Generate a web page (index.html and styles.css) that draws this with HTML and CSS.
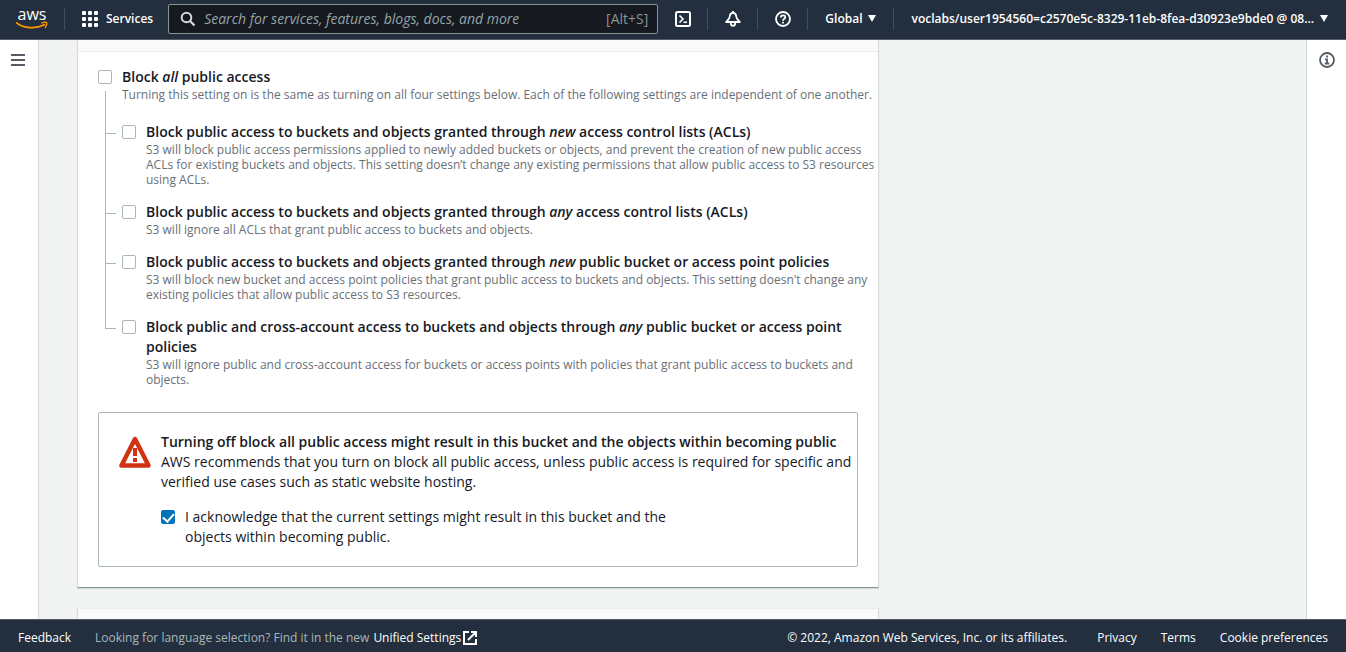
FILE: index.html
```
<!DOCTYPE html>
<html lang="en">
<head>
<meta charset="utf-8">
<title>S3 bucket - Block public access</title>
<link rel="stylesheet" href="styles.css">
</head>
<body>
<header class="topbar">
  <a class="logo" href="#" aria-label="AWS home">
    <svg width="32" height="30" viewBox="0 0 32 30" aria-hidden="true">
      <text class="logo-text" x="16" y="16" text-anchor="middle">aws</text>
      <path d="M0.500 18.800C8 24.600 20 25 28.400 20.800" fill="none" stroke="#f90" stroke-width="1.700" stroke-linecap="round"/>
      <path d="M25.800 19c1.900-.9 4.400-.8 4.900-.3s0 3.200-1.600 4.900" fill="none" stroke="#f90" stroke-width="1.300" stroke-linecap="round" stroke-linejoin="round"/>
    </svg>
  </a>
  <span class="divider"></span>
  <button class="services" type="button">
    <svg width="16" height="16" viewBox="0 0 16 16" fill="#fff" aria-hidden="true">
      <rect width="4" height="4" rx="1"/><rect x="6" width="4" height="4" rx="1"/><rect x="12" width="4" height="4" rx="1"/>
      <rect y="6" width="4" height="4" rx="1"/><rect x="6" y="6" width="4" height="4" rx="1"/><rect x="12" y="6" width="4" height="4" rx="1"/>
      <rect y="12" width="4" height="4" rx="1"/><rect x="6" y="12" width="4" height="4" rx="1"/><rect x="12" y="12" width="4" height="4" rx="1"/>
    </svg>
    Services
  </button>
  <div class="search">
    <svg width="16" height="16" viewBox="0 0 16 16" fill="none" stroke="#d5dbdb" stroke-width="2" aria-hidden="true">
      <circle cx="6.500" cy="6.500" r="4.800"/><path d="M10 10l4.500 4.500" stroke-width="2.300"/>
    </svg>
    <input class="search-input" type="text" aria-label="Search" placeholder="Search for services, features, blogs, docs, and more">
    <span class="shortcut">[Alt+S]</span>
  </div>
  <button class="icon-button" type="button" aria-label="CloudShell">
    <svg width="16" height="16" viewBox="0 0 16 16" fill="none" stroke="#fff" stroke-width="2" aria-hidden="true">
      <rect x="1" y="1" width="14" height="14" rx="1.500"/><path d="M4.500 4.500L8 8l-3.500 3.500M8.500 11.200H12" stroke-width="1.600"/>
    </svg>
  </button>
  <span class="divider"></span>
  <button class="icon-button" type="button" aria-label="Notifications">
    <svg width="16" height="16" viewBox="0 0 16 16" fill="none" stroke="#fff" stroke-width="1.800" stroke-linejoin="round" aria-hidden="true">
      <path d="M8 1.800C6.200 1.800 5 3.200 4.800 5.200C4.600 8 3.400 8.800 1.200 11H14.800C12.600 8.800 11.400 8 11.200 5.200C11 3.200 9.800 1.800 8 1.800Z"/>
      <path d="M5.700 11.500c0 4.500 4.600 4.500 4.600 0"/><path d="M8 0v2"/>
    </svg>
  </button>
  <span class="divider"></span>
  <button class="icon-button" type="button" aria-label="Help">
    <svg width="16" height="16" viewBox="0 0 16 16" fill="none" stroke="#fff" stroke-width="1.800" aria-hidden="true">
      <circle cx="8" cy="8" r="7"/><path d="M5.800 6.500C5.800 3.600 10.300 3.700 10.300 6.300C10.300 7.900 8 7.700 8 9.700M8 10.800v1.700"/>
    </svg>
  </button>
  <span class="divider"></span>
  <button class="menu-button" type="button">Global
    <svg width="8" height="7" viewBox="0 0 8 7" aria-hidden="true"><path d="M0 0h8L4 7z" fill="#fff"/></svg>
  </button>
  <span class="divider"></span>
  <button class="menu-button account" type="button"><span class="account-name">voclabs/user1954560=c2570e5c-8329-11eb-8fea-d30923e9bde0 @ 08...</span>
    <svg width="8" height="7" viewBox="0 0 8 7" aria-hidden="true"><path d="M0 0h8L4 7z" fill="#fff"/></svg>
  </button>
</header>

<div class="workspace">
  <nav class="rail rail-left" aria-label="Side navigation">
    <button class="rail-button" type="button" aria-label="Open navigation">
      <svg width="14" height="12" viewBox="0 0 14 12" fill="#545b64" aria-hidden="true"><path d="M0 0h14v2H0zM0 5h14v2H0zM0 10h14v2H0z"/></svg>
    </button>
  </nav>
  <main class="content">
    <section class="card card-access">
      <div class="card-header"></div>
      <div class="card-body">
        <div class="option">
          <input class="check" type="checkbox" id="block-all">
          <div class="option-text">
            <label class="option-title" for="block-all">Block <em>all</em> public access</label>
            <p class="option-desc">Turning this setting on is the same as turning on all four settings below. Each of the following settings are independent of one another.</p>
          </div>
        </div>
        <ul class="tree">
          <li class="option branch">
            <input class="check" type="checkbox" id="new-acl">
            <div class="option-text">
              <label class="option-title" for="new-acl">Block public access to buckets and objects granted through <em>new</em> access control lists (ACLs)</label>
              <p class="option-desc">S3 will block public access permissions applied to newly added buckets or objects, and prevent the creation of new public access<br>ACLs for existing buckets and objects. This setting doesn’t change any existing permissions that allow public access to S3 resources<br>using ACLs.</p>
            </div>
          </li>
          <li class="option branch">
            <input class="check" type="checkbox" id="any-acl">
            <div class="option-text">
              <label class="option-title" for="any-acl">Block public access to buckets and objects granted through <em>any</em> access control lists (ACLs)</label>
              <p class="option-desc">S3 will ignore all ACLs that grant public access to buckets and objects.</p>
            </div>
          </li>
          <li class="option branch">
            <input class="check" type="checkbox" id="new-policy">
            <div class="option-text">
              <label class="option-title" for="new-policy">Block public access to buckets and objects granted through <em>new</em> public bucket or access point policies</label>
              <p class="option-desc">S3 will block new bucket and access point policies that grant public access to buckets and objects. This setting doesn't change any<br>existing policies that allow public access to S3 resources.</p>
            </div>
          </li>
          <li class="option branch">
            <input class="check" type="checkbox" id="any-policy">
            <div class="option-text">
              <label class="option-title" for="any-policy">Block public and cross-account access to buckets and objects through <em>any</em> public bucket or access point<br>policies</label>
              <p class="option-desc">S3 will ignore public and cross-account access for buckets or access points with policies that grant public access to buckets and<br>objects.</p>
            </div>
          </li>
        </ul>
        <div class="alert">
          <svg class="alert-icon" width="32" height="32" viewBox="0 0 32 32" aria-hidden="true">
            <path d="M16 3L2.500 29.500h27z" fill="none" stroke="#d13212" stroke-width="4.500" stroke-linejoin="round"/>
            <path d="M14 12h4v8h-4zM14 22h4v4h-4z" fill="#d13212"/>
          </svg>
          <div class="alert-text">
            <h2 class="alert-title">Turning off block all public access might result in this bucket and the objects within becoming public</h2>
            <p class="alert-copy">AWS recommends that you turn on block all public access, unless public access is required for specific and<br>verified use cases such as static website hosting.</p>
            <div class="option acknowledge">
              <input class="check" type="checkbox" id="ack" checked>
              <label class="ack-label" for="ack">I acknowledge that the current settings might result in this bucket and the objects within becoming public.</label>
            </div>
          </div>
        </div>
      </div>
    </section>
    <section class="card">
      <div class="card-header card-header-next"></div>
    </section>
  </main>
  <aside class="rail rail-right" aria-label="Help panel">
    <button class="rail-button" type="button" aria-label="Info">
      <svg width="16" height="16" viewBox="0 0 16 16" fill="none" stroke="#545b64" stroke-width="1.800" aria-hidden="true">
        <circle cx="8" cy="8" r="7"/><path d="M8 3.500v2M6 7.300h2v4M5.800 11.500h4.400"/>
      </svg>
    </button>
  </aside>
</div>

<footer class="footer">
  <a class="footer-link" href="#">Feedback</a>
  <p class="language">Looking for language selection? Find it in the new <a class="footer-link settings" href="#">Unified Settings<svg width="14" height="14" viewBox="0 0 14 14" fill="none" stroke="#fff" stroke-width="2" aria-hidden="true"><path d="M6 1H1v12h12V8M8 1h5v5M13 1L5 9"/></svg></a></p>
  <span class="copyright">© 2022, Amazon Web Services, Inc. or its affiliates.</span>
  <a class="footer-link" href="#">Privacy</a>
  <a class="footer-link" href="#">Terms</a>
  <a class="footer-link" href="#">Cookie preferences</a>
</footer>
</body>
</html>
```
FILE: styles.css
```
* { box-sizing: border-box; }

body {
  margin: 0;
  height: 100vh;
  display: flex;
  flex-direction: column;
  overflow: hidden;
  background: #f2f3f3;
  color: #16191f;
  font: 14px/20px "Open Sans", "Noto Sans", sans-serif;
}

button {
  border: 0;
  padding: 0;
  background: none;
  color: inherit;
  font: inherit;
  cursor: pointer;
}

p, h2, ul { margin: 0; padding: 0; }
a { color: inherit; text-decoration: none; }
svg { flex: none; display: block; }

/* Top bar */
.topbar {
  flex: none;
  display: flex;
  align-items: center;
  height: 40px;
  padding: 0 18px 2px 16px;
  background: #232f3e;
  border-bottom: 1px solid #545b64;
  color: #fff;
  font-size: 12px;
  font-weight: 600;
}
.logo { margin-right: 16px; }
.logo-text {
  font: 500 16px "Open Sans", sans-serif;
  fill: #fff;
}
.divider {
  flex: none;
  width: 1px;
  height: 22px;
  background: #414d5c;
}
.services {
  display: flex;
  align-items: center;
  gap: 8px;
  padding: 0 15px 0 17px;
}
.search {
  flex: 1;
  display: flex;
  align-items: center;
  gap: 8px;
  height: 30px;
  padding: 0 9px 0 11px;
  background: #16191f;
  border: 1px solid #879596;
  border-radius: 2px;
}
.search-input {
  flex: 1;
  min-width: 0;
  padding: 0;
  border: 0;
  outline: 0;
  background: none;
  color: #fff;
  font: 14px/20px "Open Sans", sans-serif;
}
.search-input::placeholder {
  color: #95a5a6;
  font-style: italic;
}
.shortcut {
  color: #879596;
  font-size: 14px;
  font-weight: 400;
}
.icon-button {
  flex: none;
  display: flex;
  justify-content: center;
  width: 49px;
}
.menu-button {
  display: flex;
  align-items: center;
  gap: 6px;
  padding: 0 17px;
  white-space: nowrap;
}
.account { padding-right: 0; }

/* Page body */
.workspace {
  flex: 1;
  min-height: 0;
  display: flex;
}
.rail {
  flex: none;
  width: 39px;
  background: #fff;
}
.rail-left { border-right: 1px solid #d5dbdb; }
.rail-right {
  width: 40px;
  border-left: 1px solid #d5dbdb;
}
.rail-button {
  display: flex;
  align-items: center;
  justify-content: center;
  width: 100%;
  height: 40px;
}
.rail-left .rail-button { padding-right: 2px; }
.content {
  flex: 1;
  min-width: 0;
  overflow: hidden;
  padding: 0 38px;
}

.card {
  max-width: 802px;
  margin-bottom: 20px;
  background: #fff;
  border: 1px solid #d5dbdb;
  border-top-color: #eaeded;
  border-bottom-color: #879596;
  box-shadow: 0 1px 1px #d5dbdb;
}
.card-access { border-top: 0; }
.card-header {
  height: 12px;
  background: #fafafa;
  border-bottom: 1px solid #eaeded;
}
.card-header-next { height: 53px; }
.card-body { padding: 15px 20px 20px; }

/* Checkbox options */
.option {
  display: flex;
  align-items: flex-start;
  gap: 10px;
}
.option-text {
  flex: 1;
  min-width: 0;
  white-space: nowrap;
}
.option-title {
  display: block;
  font-weight: 600;
}
.option-desc {
  color: #687078;
  font-size: 12px;
  line-height: 15px;
}
.check {
  appearance: none;
  flex: none;
  width: 14px;
  height: 14px;
  margin: 3px 0;
  border: 1px solid #aab7b8;
  border-radius: 2px;
  background: #fff;
}
.check:checked {
  border-color: #0073bb;
  background: #0073bb;
  display: grid;
  place-items: center;
}
.check:checked::before {
  content: "";
  width: 5px;
  height: 9px;
  margin-bottom: 2px;
  border: solid #fff;
  border-width: 0 2px 2px 0;
  transform: rotate(42deg);
}
.tree {
  margin-top: 20px;
  list-style: none;
}
.branch {
  position: relative;
  padding: 0 0 15px 24px;
}
.branch:last-child { padding-bottom: 0; }
.branch::before {
  content: "";
  position: absolute;
  left: 7px;
  top: -31px;
  width: 10px;
  height: 42px;
  border: solid #aab7b8;
  border-width: 0 0 1px 1px;
}
.branch:not(:last-child)::after {
  content: "";
  position: absolute;
  left: 7px;
  top: 10px;
  bottom: 0;
  border-left: 1px solid #aab7b8;
}

/* Warning */
.alert {
  display: flex;
  gap: 10px;
  margin-top: 25px;
  padding: 19px;
  border: 1px solid #aab7b8;
  border-radius: 2px;
}
.alert-icon { margin-top: 4px; margin-left: 1px; }
.alert-text { min-width: 0; }
.alert-title {
  font-size: 14px;
  line-height: 20px;
  font-weight: 600;
  white-space: nowrap;
}
.alert-copy { white-space: nowrap; }
.acknowledge { margin-top: 15px; }
.ack-label { max-width: 500px; }

/* Footer */
.footer {
  flex: none;
  display: flex;
  align-items: center;
  gap: 24px;
  height: 33px;
  padding: 4px 18px 0;
  background: #232f3e;
  border-top: 1px solid #545b64;
  color: #fff;
  font-size: 12px;
  line-height: 16px;
  font-weight: 500;
  white-space: nowrap;
}
.language {
  display: flex;
  gap: 4px;
  margin-right: auto;
  color: #aab7b8;
  font-weight: 400;
}
.settings {
  display: flex;
  align-items: center;
  gap: 2px;
  color: #fff;
  font-weight: 500;
}
.copyright { margin-right: 6px; }
```
